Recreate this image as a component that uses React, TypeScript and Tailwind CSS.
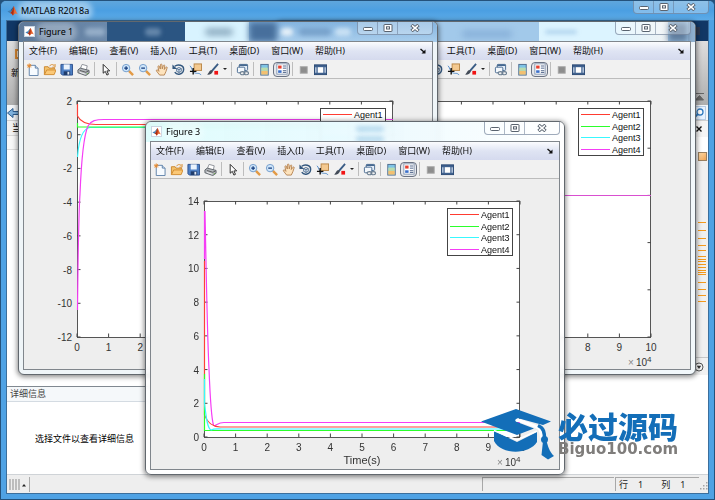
import React from "react";

type Series = { color: string; d: string };

type ChartProps = {
  label: string;
  yTicks: number[];
  xLabel?: string;
  series: Series[];
};

const PLOT = { x: 53, y: 22, w: 316, h: 236 };
const SERIES_COLORS = ["#ff3b30", "#2bff2b", "#38f8ff", "#f53df5"];
const LEGEND_ROWS = [35, 47, 58, 70];
const FONT = "Liberation Sans, Arial, sans-serif";

function Chart({ label, yTicks, xLabel, series }: ChartProps) {
  const right = PLOT.x + PLOT.w;
  const bottom = PLOT.y + PLOT.h;
  const yStep = PLOT.h / (yTicks.length - 1);
  const xStep = PLOT.w / 10;
  return (
    <svg viewBox="0 0 408 290" className="block w-full" role="img" aria-label={label} fontFamily={FONT}>
      <rect x={PLOT.x + 0.5} y={PLOT.y + 0.5} width={PLOT.w - 1} height={PLOT.h} fill="#fff" stroke="#555" />
      {Array.from({ length: 11 }, (_, i) => {
        const x = PLOT.x + i * xStep;
        return (
          <g key={i}>
            <path d={`M${x} ${PLOT.y}v3.5M${x} ${bottom}v-3.5`} stroke="#444" fill="none" />
            <text x={x} y={bottom + 14} fontSize="10" textAnchor="middle" fill="#333">
              {i}
            </text>
          </g>
        );
      })}
      {yTicks.map((value, i) => {
        const y = PLOT.y + i * yStep;
        return (
          <g key={value}>
            <path d={`M${PLOT.x} ${y}h3.5M${right} ${y}h-3.5`} stroke="#444" fill="none" />
            <text x={PLOT.x - 5} y={y + 4} fontSize="10" textAnchor="end" fill="#333">
              {value}
            </text>
          </g>
        );
      })}
      {series.map((s, i) => (
        <path key={i} d={s.d} fill="none" stroke={s.color} strokeWidth="1.2" />
      ))}
      <text x="346" y={bottom + 29} fontSize="10" fill="#888">×</text>
      <text x="354" y={bottom + 29} fontSize="10" fill="#333">10</text>
      <text x="365" y={bottom + 25} fontSize="8" fill="#333">4</text>
      {xLabel && (
        <text x={PLOT.x + PLOT.w / 2} y={bottom + 27} fontSize="11" textAnchor="middle" fill="#333">
          {xLabel}
        </text>
      )}
      <rect x="296.5" y="29.5" width="65" height="47" fill="#fff" stroke="#444" />
      {SERIES_COLORS.map((color, i) => (
        <g key={color}>
          <path d={`M299 ${LEGEND_ROWS[i] + 0.5}h29`} stroke={color} />
          <text x="330" y={LEGEND_ROWS[i] + 4} fontSize="9" fill="#111">
            {`Agent${i + 1}`}
          </text>
        </g>
      ))}
    </svg>
  );
}

function MatlabLogo({ className }: { className: string }) {
  return (
    <svg viewBox="0 0 12 12" className={className} aria-hidden="true">
      <path d="M0.5 7 4 5.5 5.5 7 3.5 9z" fill="#3f7fb5" />
      <path d="M4 5.5 7.5 1 5.8 7z" fill="#2c5f8e" />
      <path d="M7.5 1C8.5 3 10 7.5 11.800 10 9.5 8.5 8 9 6.5 11.5 5.5 9.5 4.8 9 3.5 9 5.5 7.5 6.5 4.5 7.5 1z" fill="#e5602a" />
      <path d="M7.5 1C7.6 4 7.6 7 7 10 6.8 10.8 6.7 11 6.5 11.5 5.5 9.5 4.8 9 3.5 9 5.5 7.5 6.5 4.5 7.5 1z" fill="#a92b12" />
    </svg>
  );
}

function CaptionButtons() {
  return (
    <div className="flex h-[13px] rounded-b border border-t-0 border-slate-500/60 bg-white/30">
      <button aria-label="最小化" className="flex w-5 items-center justify-center border-r border-slate-500/50">
        <svg viewBox="0 0 10 8" className="h-2 w-2.5">
          <rect x="0.5" y="3.5" width="9" height="3" rx="1" fill="#fff" stroke="#59636f" />
        </svg>
      </button>
      <button aria-label="最大化" className="flex w-5 items-center justify-center border-r border-slate-500/50">
        <svg viewBox="0 0 10 8" className="h-2 w-2.5">
          <rect x="1" y="0.5" width="8" height="7" rx="0.5" fill="#fff" stroke="#59636f" />
          <rect x="3.5" y="2.800" width="3" height="2.200" fill="#fff" stroke="#59636f" />
        </svg>
      </button>
      <button aria-label="关闭" className="flex w-[34px] items-center justify-center">
        <svg viewBox="0 0 10 8" className="h-2 w-2.5">
          <path d="M1.500 1 8.500 7M8.500 1 1.500 7" stroke="#59636f" strokeWidth="3.400" />
          <path d="M2 1.400 8 6.600M8 1.400 2 6.600" stroke="#fff" strokeWidth="1.500" />
        </svg>
      </button>
    </div>
  );
}

const ICONS: Record<string, React.ReactNode> = {
  new: (
    <>
      <path d="M3.5 2.5H10L13 5.5V13.5H3.5z" fill="#f7fbff" stroke="#5c7fa8" />
      <path d="M10 2.5V5.5H13" fill="#cfdcec" stroke="#5c7fa8" />
      <path d="M3.5 0.5v5M1 3h5M1.7 1.2l3.6 3.6M5.3 1.2 1.7 4.8" stroke="#e88a2e" />
    </>
  ),
  open: (
    <>
      <path d="M1.5 12.5V4h4l1 1.5h6V7" fill="#f3c26c" stroke="#c9852d" />
      <path d="M7 3.5C8 1.5 10 1.2 12 2.5L13 1.5V4.5H10" fill="none" stroke="#d98b2b" />
      <path d="M1.5 12.5 4 7.5H14L12 12.5z" fill="#fbc876" stroke="#d08a2e" />
    </>
  ),
  save: (
    <>
      <path d="M1 1.5H13.5V13H2.500L1 11.500z" fill="#4d7fc4" stroke="#2b4f8c" />
      <rect x="4" y="1.500" width="6.500" height="5.500" fill="#eaf3fd" />
      <rect x="4" y="9" width="7" height="4" fill="#1f3c6c" />
      <rect x="8" y="9.500" width="2" height="3" fill="#dfe9f5" />
    </>
  ),
  print: (
    <>
      <path d="M3.5 6.500 5.5 1.500 11 3 10 8" fill="#fff" stroke="#8a8f96" />
      <path d="M1 7.5 3.500 5.500 13 8V11L9.5 13.500 1 10.5z" fill="#b4b8bd" stroke="#5c6168" />
      <path d="M3 8 9.500 10 12.500 8.500" fill="none" stroke="#555" />
      <path d="M3 10 9 12" stroke="#f0f0f0" />
      <path d="M10.500 11.500h1.500" stroke="#6dad45" />
    </>
  ),
  arrow: <path d="M4.500 1.500V11L6.800 9 8.500 13 10.200 12.200 8.500 8.500H11.500z" fill="#fff" stroke="#222" />,
  zoomIn: (
    <>
      <path d="M8.500 8.500 13 13" stroke="#e39a45" strokeWidth="2.600" />
      <circle cx="5.500" cy="5.500" r="4" fill="#cfe6fa" stroke="#6f9bcb" />
      <path d="M3.500 5.500h4M5.500 3.500v4" stroke="#123a7c" strokeWidth="1.300" />
    </>
  ),
  zoomOut: (
    <>
      <path d="M8.500 8.500 13 13" stroke="#e39a45" strokeWidth="2.600" />
      <circle cx="5.500" cy="5.500" r="4" fill="#cfe6fa" stroke="#6f9bcb" />
      <path d="M3.500 5.500h4" stroke="#123a7c" strokeWidth="1.300" />
    </>
  ),
  hand: (
    <path
      d="M5 13 1.5 8.5C1 7.5 2.5 7 3.3 8L4.2 9 3.2 4C3.1 2.8 4.5 2.7 4.8 3.8L5.7 6.5 5.8 2C6 0.8 7.3 0.8 7.5 2L7.8 6.3 9 2.7C9.5 1.7 10.7 2.1 10.5 3.2L10 7 11.8 4.6C12.6 3.8 13.5 4.5 13 5.5 12 8 11.5 11 10 13z"
      fill="#fde3bd"
      stroke="#b07a45"
      strokeWidth="0.9"
    />
  ),
  rotate: (
    <>
      <path d="M3 3.500C6 0.800 12.800 2 12.500 7 12.300 12.200 5.500 13.800 3 9.800" fill="none" stroke="#34587f" strokeWidth="1.600" />
      <path d="M0.500 1.500V6.500H5.500z" fill="#34587f" />
      <path d="M5 6 7.500 4.800 10 6V9L7.500 10.200 5 9zM5 6 7.500 7.200 10 6M7.500 7.200v3" fill="#dfeaf5" stroke="#34587f" strokeWidth="0.800" />
    </>
  ),
  cursor: (
    <>
      <rect x="5.500" y="1" width="8" height="7" fill="#f4c98f" stroke="#b98645" />
      <path d="M1 3C3 4 3 9 6 10.500S11 10 13 13" fill="none" stroke="#4d86c4" />
      <path d="M1 9h7M4.500 5.500v7" stroke="#111" strokeWidth="1.500" />
    </>
  ),
  brush: (
    <>
      <path d="M13 1 6.500 8.500" stroke="#3a5c85" strokeWidth="2" />
      <path d="M7.500 8.500C7 11.500 4 13 1 12.500 3 11.500 3 8 6 7.500z" fill="#444c58" />
      <rect x="9" y="8.500" width="4" height="4" fill="#f01414" />
    </>
  ),
  link: (
    <>
      <rect x="3.500" y="1.500" width="9" height="6.500" rx="1" fill="#e4edf7" stroke="#45688f" />
      <path d="M3.500 2.500h9" stroke="#45688f" strokeWidth="1.600" />
      <rect x="1.500" y="4.500" width="8" height="6" rx="1" fill="#f4f8fc" stroke="#45688f" />
      <ellipse cx="7" cy="11" rx="2.500" ry="1.700" fill="#eee" stroke="#6c7f92" strokeWidth="1.200" />
      <ellipse cx="11" cy="11" rx="2.500" ry="1.700" fill="none" stroke="#6c7f92" strokeWidth="1.200" />
    </>
  ),
  colorbar: (
    <>
      <rect x="3" y="1.500" width="8" height="11.500" fill="#7ec4e6" stroke="#4d6b8d" />
      <rect x="3.500" y="5" width="7" height="3.500" fill="#b8dcae" />
      <rect x="3.500" y="8.500" width="7" height="4" fill="#f3c070" />
    </>
  ),
  legend: (
    <>
      <rect x="1" y="1" width="12" height="12" fill="#fff" stroke="#8092ab" />
      <rect x="2.500" y="3" width="4" height="3.500" fill="#e8402f" />
      <rect x="2.500" y="8.500" width="4" height="3" fill="#3b6fc9" />
      <path d="M8 3.500h4M8 6h4M8 9h4M8 11h4" stroke="#38507a" />
    </>
  ),
  hide: <rect x="3.500" y="4" width="7.500" height="7" fill="#8d8d8d" stroke="#a8a8a8" />,
  dock: (
    <>
      <rect x="0.500" y="2" width="13" height="10.500" fill="#3f618f" stroke="#2c4a74" />
      <rect x="4" y="4.500" width="6" height="6" fill="#fff" />
      <path d="M2 4.500v6M12 4.500v6" stroke="#dfe8f5" strokeWidth="1.200" />
    </>
  ),
};

function ToolButton({ icon, label, active }: { icon: string; label: string; active?: boolean }) {
  return (
    <button
      aria-label={label}
      className={
        active
          ? "flex h-[15px] w-[17px] items-center justify-center rounded border border-gray-500 bg-gray-200"
          : "flex h-[15px] w-[17px] items-center justify-center"
      }
    >
      <svg viewBox="0 0 14 14" className={active ? "h-3 w-3" : "h-[13px] w-[13px]"}>
        {ICONS[icon]}
      </svg>
    </button>
  );
}

function Divider() {
  return <span className="mx-[2px] h-[14px] w-px bg-[#bdbdbd]" />;
}

const MENUS = ["文件(F)", "编辑(E)", "查看(V)", "插入(I)", "工具(T)", "桌面(D)", "窗口(W)", "帮助(H)"];

type FigureProps = {
  title: string;
  place: string;
  glass: string;
  chart: Omit<ChartProps, "label">;
  children?: React.ReactNode;
};

function FigureWindow({ title, place, glass, chart, children }: FigureProps) {
  return (
    <section
      aria-label={title}
      className={`absolute w-[420px] overflow-hidden rounded-md border border-[#62686e] px-1 pb-1 shadow-[0_1px_5px_1px_rgba(0,0,0,0.45)] ${place} ${glass}`}
    >
      {children}
      <header className="relative flex h-[19px] items-start justify-between">
        <div className="flex h-full items-center gap-1 pl-px">
          <span className="flex h-[11px] w-[11px] items-center justify-center border border-slate-300 bg-white">
            <MatlabLogo className="h-[9px] w-[9px]" />
          </span>
          <h2 className="rounded-full bg-white/30 text-[9px] leading-3 text-black shadow-[0_0_5px_4px_rgba(255,255,255,0.3)]">{title}</h2>
        </div>
        <CaptionButtons />
      </header>
      <div className="relative border border-[#80868c] bg-[#eeeeee]">
        <nav className="flex h-[18px] items-center justify-between bg-linear-to-b from-[#fbfcfe] via-[#dfe4f3] to-[#d5daee] pr-1.5 pl-[5px]">
          <div className="flex gap-3">
            {MENUS.map((m) => (
              <button key={m} className="text-[9px] leading-3 whitespace-nowrap text-[#111]">
                {m}
              </button>
            ))}
          </div>
          <svg viewBox="0 0 6 6" className="h-1.5 w-1.5" aria-hidden="true">
            <path d="M0.500 1 4 4" stroke="#111" strokeWidth="1.400" />
            <path d="M5.500 1.500V5.500H1.500z" fill="#111" />
          </svg>
        </nav>
        <div role="toolbar" aria-label="工具栏" className="flex h-[19px] items-center border-b border-[#bcbcbc] bg-[#f1f1f1]">
          <ToolButton icon="new" label="新建" />
          <ToolButton icon="open" label="打开" />
          <ToolButton icon="save" label="保存" />
          <ToolButton icon="print" label="打印" />
          <Divider />
          <ToolButton icon="arrow" label="编辑绘图" />
          <Divider />
          <ToolButton icon="zoomIn" label="放大" />
          <ToolButton icon="zoomOut" label="缩小" />
          <ToolButton icon="hand" label="平移" />
          <ToolButton icon="rotate" label="三维旋转" />
          <ToolButton icon="cursor" label="数据游标" />
          <ToolButton icon="brush" label="刷亮数据" />
          <button aria-label="刷亮选项" className="flex w-2 justify-center">
            <svg viewBox="0 0 4 2" className="h-0.5 w-1">
              <path d="M0 0h4L2 2z" fill="#222" />
            </svg>
          </button>
          <Divider />
          <ToolButton icon="link" label="链接绘图" />
          <Divider />
          <ToolButton icon="colorbar" label="颜色栏" />
          <ToolButton icon="legend" label="图例" active />
          <Divider />
          <ToolButton icon="hide" label="隐藏绘图工具" />
          <ToolButton icon="dock" label="显示绘图工具" />
        </div>
        <Chart label={title} {...chart} />
      </div>
    </section>
  );
}

const FIG1: Series[] = [
  { color: "#ff4038", d: "M53.5 25V37C56 42 62 45.5 72 45.5H369" },
  { color: "#38f8ff", d: "M53.5 78C55 58 59 49.5 66 48.5H369" },
  { color: "#2bff2b", d: "M53.5 44V48H369" },
  { color: "#f53df5", d: "M53.5 231C54 180 55 130 56 115C57 90 59 58 64 47C67 41.5 72 40.5 80 40.5H369" },
];
const FIG2: Series[] = [{ color: "#d94fd0", d: "M53 116.5H369" }];
const FIG3: Series[] = [
  { color: "#f53df5", d: "M53.5 32V80M54 32C55 80 56 150 58 190C59 215 60.5 240 62.5 246C64 248.5 66 243.5 73 243.5H369" },
  { color: "#ff4038", d: "M53.5 82V236C57 245 62 247.5 69 248H369" },
  { color: "#2bff2b", d: "M53.5 195V251.5H369" },
  { color: "#38f8ff", d: "M53.5 200V225C55 235 56 250 60 251C63 249.500 66 250 71 250H369" },
];

const MARKS = [222, 230, 238, 245, 250, 256, 259, 261, 264, 267, 270, 272, 274, 282, 289, 295, 301];
const MARK_TOP = 152;

function MainWindow() {
  return (
    <main className="flex h-screen flex-col overflow-hidden rounded-t-md border border-[#24527c] bg-[#4fa2e4] px-[5px] pb-[5px]">
      <header className="-mx-[5px] flex h-[19px] items-start justify-between bg-linear-to-b from-[#5fa6dd] via-[#4b9fe2] to-[#5cabe8] pr-[5px]">
        <div className="flex h-full items-center gap-[3px] pl-1.5">
          <MatlabLogo className="h-[11px] w-[11px]" />
          <h1 className="rounded-full bg-white/40 text-[9px] leading-3 text-black shadow-[0_0_5px_4px_rgba(255,255,255,0.4)]">MATLAB R2018a</h1>
        </div>
        <CaptionButtons />
      </header>
      <div className="flex min-h-0 grow flex-col border border-[#3c6f9c] bg-white">
        <div className="flex h-5 shrink-0 items-center justify-end bg-[#113765] pr-2">
          <span className="h-2 w-1.5 bg-[#2c3850]" />
        </div>
        <div className="flex h-16 shrink-0 items-end justify-between bg-linear-to-b from-[#dedede] to-[#aeaeae] px-1">
          <div className="flex h-full flex-col items-center gap-2 pt-2">
            <span className="h-2.5 w-2.5 border-2 border-[#d98933] bg-orange-100" />
            <span className="text-[9px] leading-3 text-black">新建</span>
          </div>
          <svg viewBox="0 0 9 8" className="mb-1 h-2 w-[9px]" aria-hidden="true">
            <path d="M0 0.500h9M4.500 2.500 8.500 7h-8z" fill="#666" stroke="#666" />
          </svg>
        </div>
        <div className="flex h-4 shrink-0 items-center justify-between border-b border-[#cfcfcf] bg-[#f3f5f8] pr-0.5">
          <button aria-label="后退">
            <svg viewBox="0 0 12 10" className="h-2.5 w-3">
              <path d="M0.500 5 6 0.500V3.500H12V6.500H6V9.500z" fill="#7fb2de" stroke="#2f5e8f" />
            </svg>
          </button>
          <button aria-label="搜索" className="border border-[#b9cde4] bg-[#e7f2ff] p-px">
            <svg viewBox="0 0 10 10" className="h-2.5 w-2.5">
              <circle cx="6" cy="4" r="3" fill="#fff" stroke="#2f7ac0" strokeWidth="1.300" />
              <path d="M3.800 6.200 1 9" stroke="#2f7ac0" strokeWidth="1.800" />
            </svg>
          </button>
        </div>
        <div className="flex min-h-0 grow">
          <div className="flex w-2/5 flex-col">
            <div className="h-[15px] shrink-0 border-b border-[#d8d8d8] bg-[#f2f2f2] pl-[5px] text-[9px] leading-[14px] text-black">当前文件夹</div>
            <div className="h-[14px] shrink-0 border-b border-[#dcdcdc] bg-[#f8f8f8]" />
            <div className="grow bg-white" />
            <h2 className="h-4 shrink-0 border-t border-b border-t-[#808890] border-b-[#d4dbe2] bg-[#f5f8fa] pl-[3px] text-[9px] leading-[14px] text-[#444]">详细信息</h2>
            <div className="h-[72px] shrink-0 pt-[30px] pl-7 text-[9px] text-black">
              <p className="leading-[14px] whitespace-nowrap">选择文件以查看详细信息</p>
            </div>
          </div>
          <div className="flex min-w-0 grow flex-col">
            <div className="flex h-4 shrink-0 items-center justify-end bg-[#f5f5f5] pr-1.5">
              <button aria-label="关闭编辑器">
                <svg viewBox="0 0 6 6" className="h-1.5 w-1.5">
                  <path d="M0.500 0.500l5 5M5.500 0.500l-5 5" stroke="#111" strokeWidth="1.400" />
                </svg>
              </button>
            </div>
            <div className="flex grow justify-end border-b border-[#c8c8c8] pt-[15px]">
              <div className="relative w-[13px] bg-[#f0f0f0] pl-[3px]">
                <div className="h-[9px] w-[9px] border border-[#9b8060] bg-linear-to-br from-[#ffdca8] to-[#efa352]" />
                {MARKS.map((y) => (
                  <span key={y} className="absolute left-[3px] h-px w-2 bg-[#f59a1c]" style={{ top: y - MARK_TOP }} />
                ))}
              </div>
            </div>
            <div className="flex h-[17px] shrink-0 items-center justify-end bg-[#f2f2f2] pr-1">
              <button aria-label="命令行窗口选项">
                <svg viewBox="0 0 10 10" className="h-2.5 w-2.5">
                  <circle cx="5" cy="5" r="4" fill="#f7f7f7" stroke="#555" />
                  <path d="M2.800 3.800h4.400L5 7z" fill="#333" />
                </svg>
              </button>
            </div>
            <div className="h-[99px] shrink-0" />
          </div>
        </div>
        <footer className="flex h-[19px] shrink-0 items-center border-t border-[#cfd3d7] bg-[#eeeeee] text-[9px] leading-3 text-[#222]">
          <svg viewBox="0 0 20 11" className="ml-0.5 h-[11px] w-5" aria-hidden="true">
            {[1, 4, 7, 10].map((x) => (
              <path key={x} d={`M${x} 0v11`} stroke="#b0b0b0" strokeWidth="1.600" />
            ))}
            <path d="M13 7.500h4l-2-2.500z" fill="#222" />
          </svg>
          <span className="h-[15px] w-px bg-[#aaa]" />
          <span className="grow" />
          <span className="h-[14px] w-[132px] border-t border-l border-[#a8a8a8]" />
          <span className="ml-px flex h-[14px] w-[84px] items-center gap-[10px] border-t border-l border-[#a8a8a8] pl-[3px]">
            <span>行</span>
            <span>1</span>
            <span className="ml-2">列</span>
            <span>1</span>
          </span>
          <svg viewBox="0 0 8 8" className="mt-1 ml-px h-2 w-2" aria-hidden="true">
            <path d="M6 0h1.500v1.500H6zM3 3h1.500v1.500H3zM6 3h1.500v1.500H6zM0 6h1.500v1.500H0zM3 6h1.500v1.500H3zM6 6h1.500v1.500H6z" fill="#a5a5a5" />
          </svg>
        </footer>
      </div>
    </main>
  );
}

function Watermark() {
  return (
    <div className="absolute top-[409px] left-[481px] flex gap-[3px]">
      <svg viewBox="0 0 74 52" className="h-[52px] w-[74px]" aria-hidden="true">
        <path d="M13 22V32C20 46 48 46 56 33V23L36 33z" fill="#136eb8" />
        <path d="M0 12.5 35 0 70 12.5 62 16 38 9.500C34 9 33 12 36 13L53 19.500 36 26z" fill="#136eb8" />
        <path d="M13 21.5 36 31 56 22" fill="none" stroke="#fff" strokeWidth="1.5" />
        <path d="M37 11 55 17.500C59 19 60 22 60.5 28" fill="none" stroke="#fff" strokeWidth="3" strokeLinecap="round" />
        <path d="M57 16.500C63 19 63.500 24 63.500 30" fill="none" stroke="#136eb8" strokeWidth="3.5" />
        <circle cx="63.500" cy="30.500" r="3.500" fill="#136eb8" />
        <path d="M62 32 60.500 46 67 50.500 73 47C68 42 67 37 65.500 32z" fill="#136eb8" />
      </svg>
      <div className="font-black">
        <p className="font-['Noto_Sans_CJK_SC',sans-serif] text-[30px] leading-8 text-[#136eb8]">必过源码</p>
        <p className="font-['DejaVu_Sans',sans-serif] text-[15px] leading-4 text-[#7f7d7b]">Biguo100.com</p>
      </div>
    </div>
  );
}

export default function App() {
  return (
    <div className="relative min-h-screen overflow-hidden bg-[#24527c] font-['Noto_Sans','Noto_Sans_CJK_SC',sans-serif]">
      <MainWindow />
      <FigureWindow
        title="Figure 2"
        place="top-[21px] left-[276px]"
        glass="bg-[#f2f8fb]"
        chart={{ yTicks: [5, 4, 3, 2, 1, 0], series: FIG2 }}
      >
        <div className="absolute inset-x-0 top-0 flex h-5 bg-[#a2c9ea]">
          <span className="ml-[262px] w-[75px] bg-[#dcf4ff]" />
          <span className="w-[54px] bg-linear-to-r from-[#dcf4ff] to-[#eef2f4]" />
          <span className="w-5 bg-[#5f7c9c] blur-[3px]" />
          <span className="grow bg-[#8fb0cf]" />
          <span className="absolute top-2 left-[185px] h-2 w-[50px] rounded-full bg-[#719ccb]/50 blur-[3px]" />
          <span className="absolute top-2 left-[268px] h-1 w-8 rounded-full bg-[#84b3dc]/50 blur-[2px]" />
        </div>
      </FigureWindow>
      <FigureWindow
        title="Figure 1"
        place="top-[21px] left-[18px]"
        glass="bg-[#eff5f8]"
        chart={{ yTicks: [2, 0, -2, -4, -6, -8, -10, -12], series: FIG1 }}
      >
        <div className="absolute inset-x-0 top-0 flex h-5 bg-linear-to-b from-[#84b4df] to-[#a9ceed]">
          <span className="w-[88px] bg-linear-to-r from-[#5f7a99] to-[#6b89ab]" />
          <span className="w-[78px] bg-[#2b5582]" />
          <span className="w-[64px] bg-[#d8f3ff]" />
          <span className="w-7 bg-[#476f9c] blur-[3px]" />
          <span className="absolute top-1.5 left-[66px] h-2 w-5 rounded-full bg-[#a8bfd6]/70 blur-[2px]" />
          <span className="absolute top-1.5 left-[126px] h-2 w-4 rounded-full bg-[#8ca8c6]/60 blur-[2px]" />
          <span className="absolute top-1.5 left-[186px] h-2 w-7 rounded-full bg-[#7f9fb5]/80 blur-[3px]" />
          <span className="absolute top-1.5 left-[262px] h-2 w-3 rounded-full bg-[#e4eff8] blur-[2px]" />
          <span className="absolute top-1.5 left-[280px] h-2 w-8 rounded-full bg-[#5b86b4]/50 blur-[2px]" />
          <span className="absolute top-1.5 left-[316px] h-2 w-4 rounded-full bg-[#d5e8f8]/80 blur-[2px]" />
        </div>
      </FigureWindow>
      <FigureWindow
        title="Figure 3"
        place="top-[121px] left-[145px]"
        glass="bg-white/80 backdrop-blur-[2px]"
        chart={{ yTicks: [14, 12, 10, 8, 6, 4, 2, 0], xLabel: "Time(s)", series: FIG3 }}
      >
        <div className="absolute inset-x-0 top-0 h-5 bg-linear-to-r from-[#c9fbfb]/60 via-[#e2f8ff]/70 to-white/60">
          <span className="absolute top-1 left-[210px] h-1.5 w-7 rounded-full bg-[#9ccbea]/60 blur-[2px]" />
          <span className="absolute top-3.5 left-[210px] h-1.5 w-7 rounded-full bg-[#9ccbea]/60 blur-[2px]" />
        </div>
      </FigureWindow>
      <Watermark />
    </div>
  );
}
